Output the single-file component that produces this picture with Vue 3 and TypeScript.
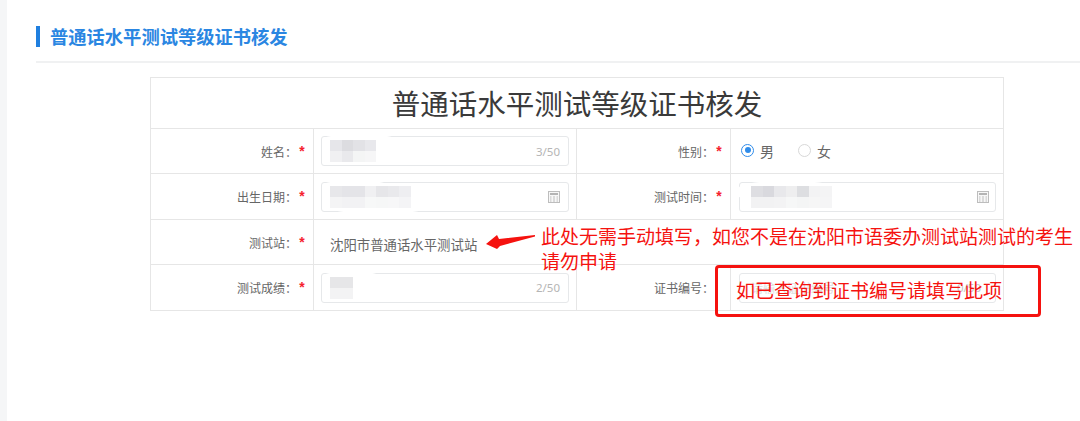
<script setup lang="ts">
interface Mosaic { cols: number; cell: number; colors: string[] }
const nameM: Mosaic = { cols: 4, cell: 11.5, colors: ['#e6e6ea', '#dcdce0', '#e2e2e6', '#e8e8ec', '#f0f0f2', '#e9e9ec', '#f4f5f5', '#f6f6f7'] }
const dateM: Mosaic = { cols: 7, cell: 11.5, colors: ['#e7e7ea', '#e4e4e8', '#e4e4e8', '#f0f0f2', '#e6e6e9', '#e9e9ec', '#eeeef1', '#f4f4f5', '#f2f2f4', '#f2f2f4', '#f7f8f8', '#f6f7f7', '#f7f7f8', '#f4f4f6'] }
const timeM: Mosaic = { cols: 7, cell: 11.5, colors: ['#dedee2', '#d9d9de', '#e8e8eb', '#eeeeef', '#dddee1', '#f3f3f4', '#f4f4f5', '#f2f2f3', '#f2f2f3', '#f3f3f4', '#f6f7f7', '#f4f5f5', '#f6f6f6', '#f5f5f6'] }
const scoreM: Mosaic = { cols: 2, cell: 11.5, colors: ['#e6e6e8', '#e6e6e8', '#f3f3f4', '#f3f3f4'] }
</script>

<template>
  <div class="page">
    <aside class="strip"></aside>
    <main class="main">
      <h2 class="heading">普通话水平测试等级证书核发</h2>
      <div class="divider"></div>

      <section class="table">
        <h1 class="title">普通话水平测试等级证书核发</h1>

        <div class="row r45">
          <div class="label">姓名：<i class="star">*</i></div>
          <div class="value">
            <div class="input">
              <span class="smear s-name"></span>
              <div class="mosaic" :style="{ gridTemplateColumns: `repeat(${nameM.cols}, ${nameM.cell}px)` }">
                <b v-for="(c, i) in nameM.colors" :key="i" :style="{ background: c }"></b>
              </div>
              <span class="count">3/50</span>
            </div>
          </div>
          <div class="label">性别：<i class="star">*</i></div>
          <div class="value radios">
            <span class="radio on"></span><span class="radio-text">男</span>
            <span class="radio off"></span><span class="radio-text">女</span>
          </div>
        </div>

        <div class="row r46">
          <div class="label">出生日期：<i class="star">*</i></div>
          <div class="value">
            <div class="input">
              <span class="smear s-date"></span>
              <span class="smear s-date-low"></span>
              <div class="mosaic" :style="{ gridTemplateColumns: `repeat(${dateM.cols}, ${dateM.cell}px)` }">
                <b v-for="(c, i) in dateM.colors" :key="i" :style="{ background: c }"></b>
              </div>
              <svg class="cal" viewBox="0 0 12 12" width="12" height="12">
                <rect x="0.5" y="0.5" width="11" height="11" fill="#f7f7f7" stroke="#bdbdbd" />
                <rect x="2" y="2" width="8" height="2" fill="#b4b4b4" />
                <path d="M2 6h1.500M5 6h2M8.500 6h1.500M2 8h1.500M5 8h2M8.500 8h1.500M2 10h1.500M5 10h2M8.500 10h1.500" stroke="#bdbdbd" stroke-width="1" />
              </svg>
            </div>
          </div>
          <div class="label">测试时间：<i class="star">*</i></div>
          <div class="value">
            <div class="input wide">
              <span class="smear s-time"></span>
              <div class="mosaic" :style="{ gridTemplateColumns: `repeat(${timeM.cols}, ${timeM.cell}px)` }">
                <b v-for="(c, i) in timeM.colors" :key="i" :style="{ background: c }"></b>
              </div>
              <svg class="cal" viewBox="0 0 12 12" width="12" height="12">
                <rect x="0.5" y="0.5" width="11" height="11" fill="#f7f7f7" stroke="#bdbdbd" />
                <rect x="2" y="2" width="8" height="2" fill="#b4b4b4" />
                <path d="M2 6h1.500M5 6h2M8.500 6h1.500M2 8h1.500M5 8h2M8.500 8h1.500M2 10h1.500M5 10h2M8.500 10h1.500" stroke="#bdbdbd" stroke-width="1" />
              </svg>
            </div>
          </div>
        </div>

        <div class="row r45">
          <div class="label">测试站：<i class="star">*</i></div>
          <div class="value station">沈阳市普通话水平测试站</div>
        </div>

        <div class="row r46">
          <div class="label">测试成绩：<i class="star">*</i></div>
          <div class="value">
            <div class="input">
              <span class="smear s-score"></span>
              <div class="mosaic" :style="{ gridTemplateColumns: `repeat(${scoreM.cols}, ${scoreM.cell}px)` }">
                <b v-for="(c, i) in scoreM.colors" :key="i" :style="{ background: c }"></b>
              </div>
              <span class="count">2/50</span>
            </div>
          </div>
          <div class="label plain">证书编号：</div>
          <div class="value">
            <div class="input wide">
              <span class="placeholder">请输入证书编号</span>
              <span class="count">0/50</span>
            </div>
          </div>
        </div>
      </section>
    </main>

    <svg class="arrow" viewBox="0 0 52 17" width="52" height="17">
      <path d="M1 11 L12 2 L14 6 L50 2 L50 3.500 L15 13 L12 16 Z" fill="#f5120f" />
    </svg>
    <p class="note note-a">此处无需手动填写，如您不是在沈阳市语委办测试站测试的考生<br />请勿申请</p>
    <div class="redbox"></div>
    <p class="note note-b">如已查询到证书编号请填写此项</p>
  </div>
</template>

<style>
html, body { margin: 0; background: #fff; }
</style>

<style scoped>
.page {
  position: relative;
  display: flex;
  width: 1080px;
  height: 421px;
  overflow: hidden;
  background: #fff;
  font-family: "Noto Sans CJK SC", "Noto Sans", sans-serif;
}
.strip { width: 7px; flex: none; background: #f5f6f7; }
.main { flex: 1; padding: 26px 0 0 29px; min-width: 0; }
.heading {
  margin: 0;
  height: 21px;
  line-height: 21px;
  padding-left: 10px;
  border-left: 4px solid #1f7fdf;
  font-size: 18.300px;
  font-weight: 700;
  color: #2a86e2;
  white-space: nowrap;
}
.divider { height: 2px; margin-top: 14px; background: #f0f1f2; }
.table {
  width: 854px;
  margin: 14px 0 0 114px;
  box-sizing: border-box;
  border: 1px solid #e6e6e6;
}
.title {
  margin: 0;
  height: 50px;
  line-height: 50px;
  text-align: center;
  font-size: 28.500px;
  font-weight: 400;
  color: #3a3a3a;
  white-space: nowrap;
}
.row {
  display: grid;
  grid-template-columns: 163px 263px 154px 272px;
  border-top: 1px solid #e6e6e6;
  box-sizing: border-box;
}
.r46 { height: 46px; }
.r45 { height: 45px; }
.label {
  display: flex;
  align-items: center;
  justify-content: flex-end;
  padding: 0 6px 0 0;
  border-right: 1px solid #e6e6e6;
  font-size: 12px;
  color: #666;
  white-space: nowrap;
}
.label.plain { padding-right: 16px; }
.value {
  border-right: 1px solid #e6e6e6;
  display: flex;
  align-items: center;
  padding-left: 7px;
  box-sizing: border-box;
}
.value:last-child { border-right: 0; padding-left: 8px; }
.star {
  width: 10px;
  margin-top: -1px;
  text-align: center;
  font: 700 14px "Liberation Sans", sans-serif;
  color: #f5222d;
}
.input {
  position: relative;
  display: flex;
  align-items: center;
  justify-content: space-between;
  width: 248px;
  height: 30px;
  box-sizing: border-box;
  padding: 0 8px 0 8px;
  border: 1px solid #e6e8ea;
  border-radius: 3px;
  background: #fff;
}
.input.wide { width: 257px; padding-right: 6px; padding-left: 11px; }
.smear {
  position: absolute;
  background: #fff;
  border-radius: 40%;
}
.s-name { left: 3px; top: -2px; width: 68px; height: 7px; }
.s-date { left: 3px; top: -2px; width: 60px; height: 7px; }
.s-date-low { left: 14px; bottom: -2px; width: 84px; height: 7px; }
.s-time { left: -3px; top: -2px; width: 100px; height: 22px; }
.s-score { left: 3px; top: -2px; width: 52px; height: 7px; }
.mosaic {
  position: relative;
  display: grid;
  grid-auto-rows: 11px;
}
.mosaic b { display: block; }
.count { font-size: 11.500px; color: #b5b5b5; font-family: "Noto Sans", sans-serif; }
.input.wide .count { padding-right: 8px; color: #c4c4c4; }
.placeholder { font-size: 12px; color: #dcdcdc; }
.cal { flex: none; position: relative; }
.radios { font-size: 14px; color: #666; padding-left: 10px !important; }
.radio {
  width: 13px;
  height: 13px;
  box-sizing: border-box;
  border-radius: 50%;
  flex: none;
  position: relative;
  top: -1px;
}
.radio.on { border: 1.500px solid #2f8cea; background: #fff; }
.radio.on::after {
  content: "";
  position: absolute;
  inset: 2.500px;
  background: #2f8cea;
  border-radius: 50%;
}
.radio.off { border: 1.500px solid #d8d8d8; margin-left: 24px; }
.radio-text { margin-left: 6px; }
.station {
  grid-column: 2 / 5;
  font-size: 13.400px;
  color: #666;
  padding: 3px 0 0 16px !important;
  white-space: nowrap;
}
.note {
  position: absolute;
  margin: 0;
  font-size: 19px;
  line-height: 25px;
  color: #f5120f;
  white-space: nowrap;
}
.note-a { left: 541px; top: 223px; }
.note-b { left: 736px; top: 277px; }
.arrow { position: absolute; left: 485px; top: 233px; }
.redbox {
  position: absolute;
  left: 715px;
  top: 265px;
  width: 326px;
  height: 52px;
  box-sizing: border-box;
  border: 3px solid #f5120f;
  border-radius: 4px;
}
</style>
